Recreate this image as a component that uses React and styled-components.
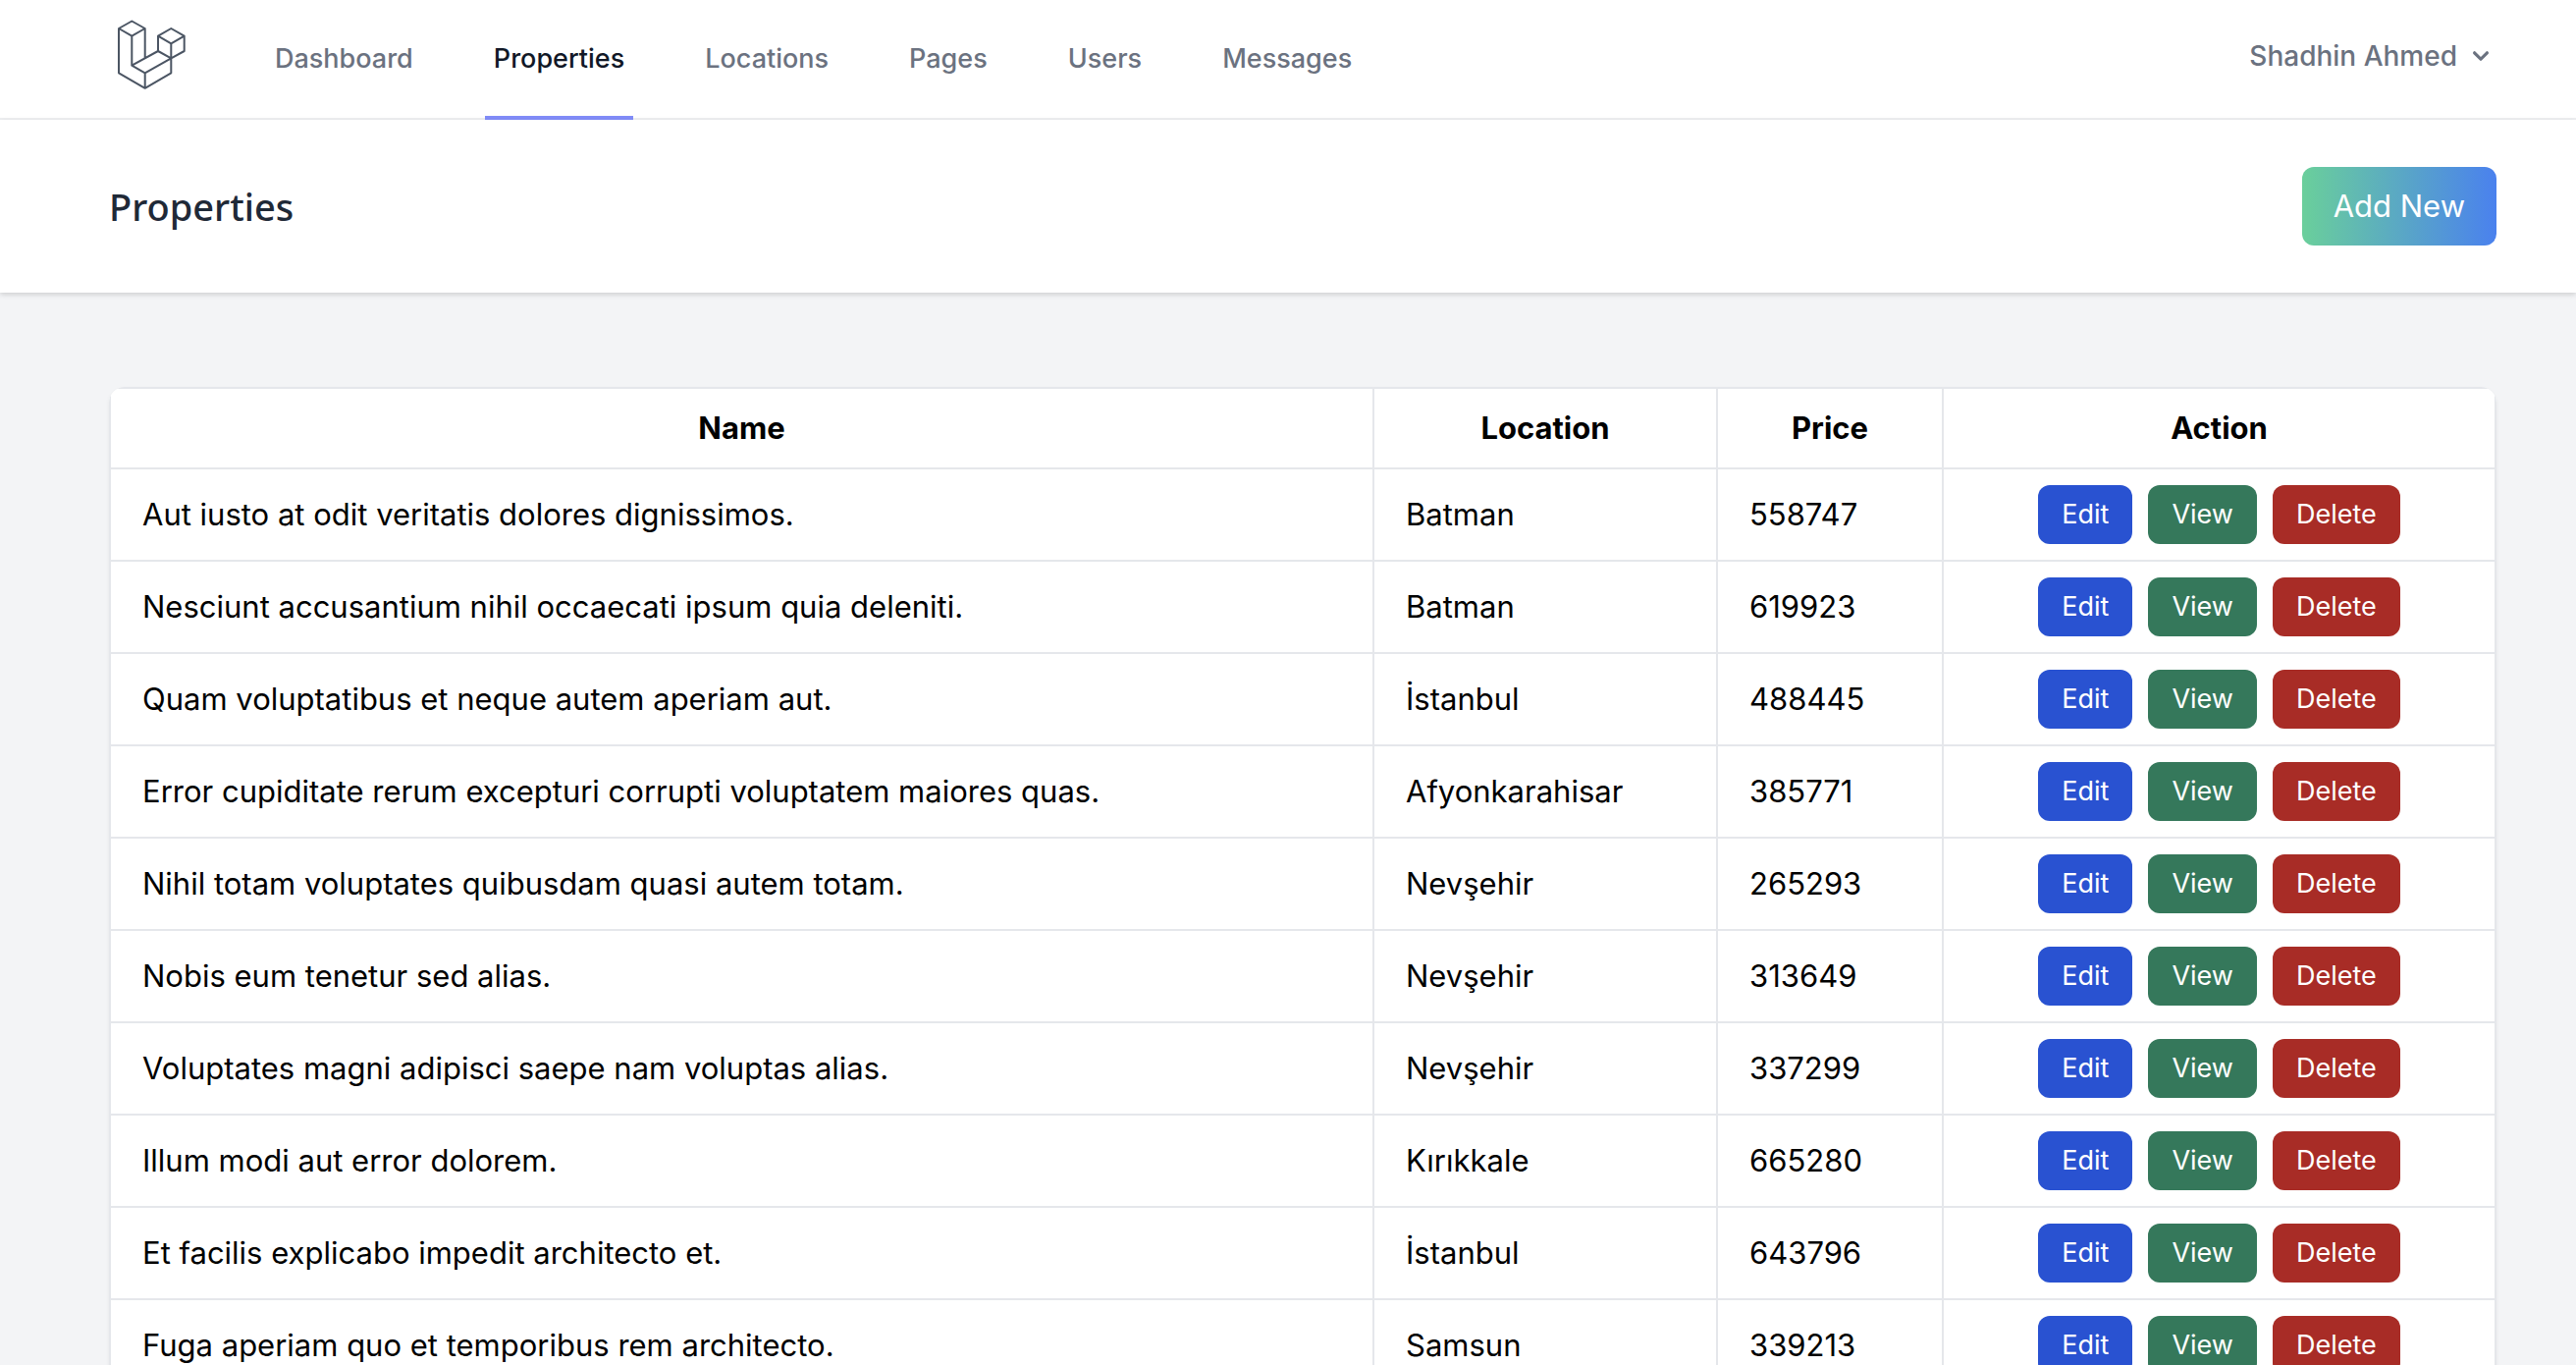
import React from "react";
import styled, { createGlobalStyle, css } from "styled-components";

const GlobalStyle = createGlobalStyle`
  *, *::before, *::after { box-sizing: border-box; }
  body {
    margin: 0;
    overflow-x: hidden;
    background: #f3f4f6;
    color: #000;
    font-family: Inter, "Noto Sans", sans-serif;
    font-size: 31px;
    line-height: 48px;
  }
  button { font-family: inherit; }
`;

const Page = styled.div`
  height: 100vh;
  overflow: hidden;
`;

const gutters = css`
  padding-left: 111px;
  padding-right: 81px;
`;

const NavBar = styled.nav`
  ${gutters}
  display: flex;
  justify-content: space-between;
  height: 122px;
  background: #fff;
  border-bottom: 2px solid #eeeff1;
`;

const NavStart = styled.div`
  display: flex;
  gap: 80px;
`;

const LogoLink = styled.a`
  display: flex;
  align-items: center;
  color: #4b5563;
`;

const NavLinks = styled.div`
  display: flex;
  gap: 64px;
  margin-bottom: -2px;
`;

const NavLink = styled.a`
  display: flex;
  align-items: center;
  padding: 2px 9px 0;
  border-bottom: 4px solid ${(p) => (p.$active ? "#818cf8" : "transparent")};
  color: ${(p) => (p.$active ? "#111827" : "#6b7280")};
  font-size: 27px;
  font-weight: 500;
  line-height: 40px;
  text-decoration: none;
`;

const UserButton = styled.button`
  display: flex;
  align-items: center;
  gap: 8px;
  padding: 0 0 6px;
  border: 0;
  background: none;
  color: #6b7280;
  font-size: 28px;
  font-weight: 500;
  line-height: 40px;
`;

const PageHeader = styled.header`
  ${gutters}
  position: relative;
  display: flex;
  align-items: center;
  justify-content: space-between;
  padding-top: 48px;
  padding-bottom: 48px;
  background: #fff;
  box-shadow: 0 2px 6px rgba(0, 0, 0, 0.1), 0 2px 4px rgba(0, 0, 0, 0.06);
`;

const Title = styled.h2`
  margin: 0;
  color: #1f2937;
  font-family: "Noto Sans", sans-serif;
  font-size: 38px;
  font-weight: 500;
  line-height: 50px;
`;

const AddButton = styled.button`
  padding: 16px 32px;
  border: 0;
  border-radius: 12px;
  background: linear-gradient(to right, #6acf9b, #4a81ee);
  color: #fff;
  font-size: 31px;
  line-height: 48px;
`;

const Main = styled.main`
  ${gutters}
  padding-top: 96px;
`;

const Card = styled.div`
  overflow: hidden;
  border-radius: 16px;
  background: #fff;
  box-shadow: 0 2px 4px rgba(0, 0, 0, 0.06);
`;

const Table = styled.table`
  width: 100%;
  table-layout: fixed;
  border-collapse: collapse;
`;

const Col = styled.col`
  width: ${(p) => p.$width};
`;

const cell = css`
  padding: 16px 32px;
  border: 2px solid #e5e7eb;
`;

const HeadCell = styled.th`
  ${cell}
  font-weight: 700;
`;

const Cell = styled.td`
  ${cell}
  white-space: nowrap;
`;

const Actions = styled.div`
  display: flex;
  justify-content: center;
  gap: 16px;
`;

const ActionButton = styled.button`
  padding: 10px 24px;
  border: 0;
  border-radius: 12px;
  background: ${(p) => p.$color};
  color: #fff;
  font-size: 27px;
  line-height: 40px;
`;

const links = ["Dashboard", "Properties", "Locations", "Pages", "Users", "Messages"];

const properties = [
  ["Aut iusto at odit veritatis dolores dignissimos.", "Batman", "558747"],
  ["Nesciunt accusantium nihil occaecati ipsum quia deleniti.", "Batman", "619923"],
  ["Quam voluptatibus et neque autem aperiam aut.", "İstanbul", "488445"],
  ["Error cupiditate rerum excepturi corrupti voluptatem maiores quas.", "Afyonkarahisar", "385771"],
  ["Nihil totam voluptates quibusdam quasi autem totam.", "Nevşehir", "265293"],
  ["Nobis eum tenetur sed alias.", "Nevşehir", "313649"],
  ["Voluptates magni adipisci saepe nam voluptas alias.", "Nevşehir", "337299"],
  ["Illum modi aut error dolorem.", "Kırıkkale", "665280"],
  ["Et facilis explicabo impedit architecto et.", "İstanbul", "643796"],
  ["Fuga aperiam quo et temporibus rem architecto.", "Samsun", "339213"],
];

function Logo() {
  return (
    <svg width="80" height="80" viewBox="111 20 80 80" fill="none" stroke="currentColor" strokeWidth="2" strokeLinejoin="round" aria-hidden="true">
      <path d="M121 29 134.3 21.5 147.7 29 134.3 36.7ZM121 29V74.3L147.7 89.8 174.3 74.3V44.3M134.3 36.7V66.7L147.7 74.3V89.8M147.7 29V59.3M134.3 66.7 161 52 174.3 59.3 147.7 74.3M161 52V36.7L174.3 29 187.7 36.7V52L174.3 59.3M161 36.7 174.3 44.3 187.7 36.7" />
    </svg>
  );
}

function Chevron() {
  return (
    <svg width="32" height="32" viewBox="0 0 20 20" fill="currentColor" aria-hidden="true">
      <path fillRule="evenodd" clipRule="evenodd" d="M5.293 7.293a1 1 0 011.414 0L10 10.586l3.293-3.293a1 1 0 111.414 1.414l-4 4a1 1 0 01-1.414 0l-4-4a1 1 0 010-1.414z" />
    </svg>
  );
}

export default function App() {
  return (
    <Page>
      <GlobalStyle />
      <NavBar>
        <NavStart>
          <LogoLink href="#" aria-label="Home">
            <Logo />
          </LogoLink>
          <NavLinks>
            {links.map((name) => (
              <NavLink key={name} href="#" $active={name === "Properties"}>
                {name}
              </NavLink>
            ))}
          </NavLinks>
        </NavStart>
        <UserButton type="button">
          Shadhin Ahmed
          <Chevron />
        </UserButton>
      </NavBar>
      <PageHeader>
        <Title>Properties</Title>
        <AddButton type="button">Add New</AddButton>
      </PageHeader>
      <Main>
        <Card>
          <Table>
            <colgroup>
              <Col />
              <Col $width="350px" />
              <Col $width="230px" />
              <Col $width="563px" />
            </colgroup>
            <thead>
              <tr>
                <HeadCell>Name</HeadCell>
                <HeadCell>Location</HeadCell>
                <HeadCell>Price</HeadCell>
                <HeadCell>Action</HeadCell>
              </tr>
            </thead>
            <tbody>
              {properties.map(([name, location, price]) => (
                <tr key={name}>
                  <Cell>{name}</Cell>
                  <Cell>{location}</Cell>
                  <Cell>{price}</Cell>
                  <Cell>
                    <Actions>
                      <ActionButton type="button" $color="#2952d1">Edit</ActionButton>
                      <ActionButton type="button" $color="#35785b">View</ActionButton>
                      <ActionButton type="button" $color="#a82c26">Delete</ActionButton>
                    </Actions>
                  </Cell>
                </tr>
              ))}
            </tbody>
          </Table>
        </Card>
      </Main>
    </Page>
  );
}
